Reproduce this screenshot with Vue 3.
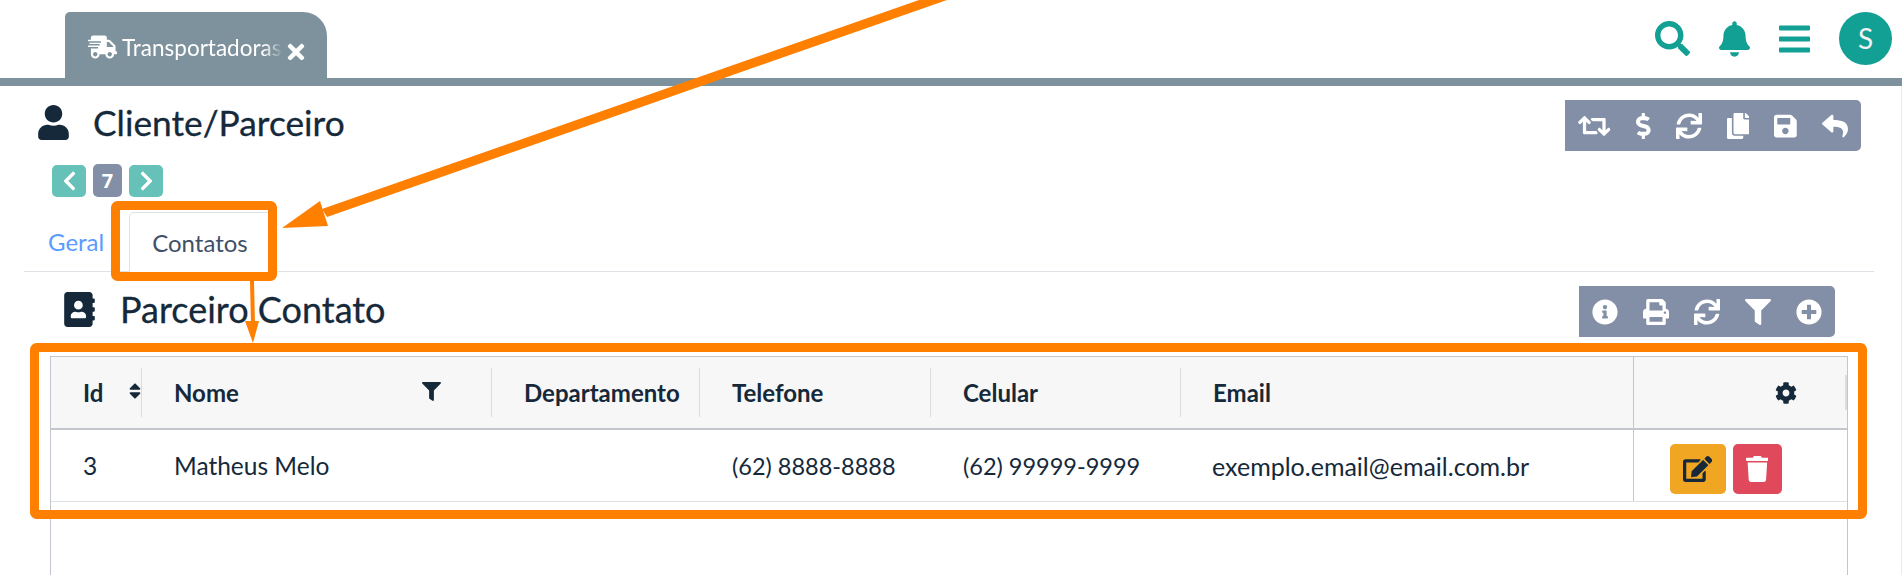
<template>
  <div class="page">
    <header class="topbar">
      <div class="tab">
        <svg class="tab-truck" viewBox="0 0 640 512"><path :d="icons.truck" /></svg>
        <span class="tab-label">Transportadoras</span>
        <svg class="tab-close" viewBox="0 0 352 512"><path :d="icons.times" /></svg>
      </div>
      <div class="nav">
        <svg class="nav-search" viewBox="0 0 512 512"><path :d="icons.search" /></svg>
        <svg class="nav-icon" viewBox="0 0 448 512"><path :d="icons.bell" /></svg>
        <svg class="nav-icon" viewBox="0 0 448 512"><path :d="icons.bars" /></svg>
        <div class="avatar">S</div>
      </div>
    </header>
    <div class="bar"></div>

    <main class="content">
      <section class="head">
        <h1 class="title">
          <svg class="title-icon" viewBox="0 0 448 512"><path :d="icons.user" /></svg>
          Cliente/Parceiro
        </h1>
        <div class="toolbar">
          <svg v-for="b in mainTools" :key="b.name" class="tool" :viewBox="b.box"><path :d="icons[b.name]" /></svg>
        </div>
      </section>

      <div class="pager">
        <button class="page-btn">
          <svg viewBox="0 0 320 512"><path :d="icons.left" /></svg>
        </button>
        <span class="page-num">7</span>
        <button class="page-btn">
          <svg viewBox="0 0 320 512"><path :d="icons.right" /></svg>
        </button>
      </div>

      <nav class="tabs">
        <a class="tab-link">Geral</a>
        <a class="tab-link active">Contatos</a>
      </nav>

      <section class="head sub">
        <h2 class="subtitle">
          <svg class="sub-icon" viewBox="0 0 448 512"><path :d="icons.book" /></svg>
          Parceiro Contato
        </h2>
        <div class="toolbar">
          <svg v-for="b in subTools" :key="b.name" class="tool" :viewBox="b.box"><path :d="icons[b.name]" /></svg>
        </div>
      </section>

      <div class="grid-wrap">
        <table class="grid">
          <colgroup>
            <col v-for="c in columns" :key="c.label" :style="{ width: c.width + 'px' }" />
            <col />
          </colgroup>
          <thead>
            <tr>
              <th v-for="c in columns" :key="c.label">
                <div class="th-in" :class="c.cls">
                  {{ c.label }}
                  <svg v-if="c.cls === 'th-id'" class="sort" viewBox="0 0 320 512"><path :d="icons.sort" /></svg>
                  <svg v-if="c.cls === 'th-name'" class="filter" viewBox="0 0 512 512"><path :d="icons.filter" /></svg>
                </div>
              </th>
              <th class="actions-col">
                <div class="th-actions">
                  <svg class="gear" viewBox="0 0 512 512"><path :d="icons.cog" /></svg>
                </div>
              </th>
            </tr>
          </thead>
          <tbody>
            <tr v-for="row in rows" :key="row.id">
              <td>{{ row.id }}</td>
              <td>{{ row.nome }}</td>
              <td>{{ row.departamento }}</td>
              <td class="phone">{{ row.telefone }}</td>
              <td class="phone">{{ row.celular }}</td>
              <td class="email">{{ row.email }}</td>
              <td class="actions-col">
                <div class="row-actions">
                  <button class="act edit">
                    <svg viewBox="0 0 576 512"><path :d="icons.edit" /></svg>
                  </button>
                  <button class="act del">
                    <svg viewBox="0 0 448 512"><path :d="icons.trash" /></svg>
                  </button>
                </div>
              </td>
            </tr>
          </tbody>
        </table>
      </div>
    </main>

    <!-- marcacoes laranja por cima da tela -->
    <svg class="marks" viewBox="0 0 1902 575">
      <polygon points="919,0 947,0 327,217 322,209" fill="#ff8000" />
      <polygon points="320,201 328,226 282,228" fill="#ff8000" />
      <rect x="115.5" y="205.5" width="157" height="71" rx="2" fill="none" stroke="#ff8000" stroke-width="9" />
      <line x1="252" y1="281" x2="253" y2="325" stroke="#ff8000" stroke-width="4" />
      <polygon points="245,321 259,321 253,343" fill="#ff8000" />
      <rect x="34.5" y="347.5" width="1828" height="167" rx="2" fill="none" stroke="#ff8000" stroke-width="9" />
    </svg>
  </div>
</template>

<script setup>
const icons = {
  truck: 'M624 352h-16V243.9c0-12.7-5.1-24.9-14.1-33.9L494 110.1c-9-9-21.2-14.1-33.9-14.1H416V48c0-26.5-21.5-48-48-48H112C85.5 0 64 21.5 64 48v48H8c-4.4 0-8 3.6-8 8v16c0 4.4 3.6 8 8 8h272c4.4 0 8 3.6 8 8v16c0 4.4-3.6 8-8 8H40c-4.4 0-8 3.6-8 8v16c0 4.4 3.6 8 8 8h208c4.4 0 8 3.6 8 8v16c0 4.4-3.6 8-8 8H8c-4.4 0-8 3.6-8 8v16c0 4.4 3.6 8 8 8h208c4.4 0 8 3.6 8 8v16c0 4.4-3.6 8-8 8H64v128c0 53 43 96 96 96s96-43 96-96h128c0 53 43 96 96 96s96-43 96-96h48c8.8 0 16-7.2 16-16v-32c0-8.8-7.2-16-16-16zM160 464c-26.5 0-48-21.5-48-48s21.5-48 48-48 48 21.5 48 48-21.5 48-48 48zm320 0c-26.5 0-48-21.5-48-48s21.5-48 48-48 48 21.5 48 48-21.5 48-48 48zm80-208H416V144h44.1l99.9 99.9V256z',
  times: 'M242.72 256l100.07-100.07c12.28-12.28 12.28-32.19 0-44.48l-22.24-22.24c-12.28-12.28-32.19-12.28-44.48 0L176 189.28 75.93 89.21c-12.28-12.28-32.19-12.28-44.48 0L9.21 111.45c-12.28 12.28-12.28 32.19 0 44.48L109.28 256 9.21 356.07c-12.28 12.28-12.28 32.19 0 44.48l22.24 22.24c12.28 12.28 32.2 12.28 44.48 0L176 322.72l100.07 100.07c12.28 12.28 32.2 12.28 44.48 0l22.24-22.24c12.28-12.28 12.28-32.19 0-44.48L242.72 256z',
  search: 'M505 442.7L405.3 343c-4.5-4.5-10.6-7-17-7H372c27.6-35.3 44-79.7 44-128C416 93.1 322.9 0 208 0S0 93.1 0 208s93.1 208 208 208c48.3 0 92.7-16.4 128-44v16.3c0 6.4 2.5 12.5 7 17l99.7 99.7c9.4 9.4 24.6 9.4 33.9 0l28.3-28.3c9.4-9.4 9.4-24.6.1-34zM208 336c-70.7 0-128-57.2-128-128 0-70.7 57.2-128 128-128 70.7 0 128 57.2 128 128 0 70.7-57.2 128-128 128z',
  bell: 'M224 512c35.32 0 63.97-28.65 63.97-64H160.03c0 35.35 28.65 64 63.97 64zm215.39-149.71c-19.32-20.76-55.47-51.99-55.47-154.29 0-77.7-54.48-139.9-127.94-155.16V32c0-17.67-14.32-32-31.98-32s-31.98 14.33-31.98 32v20.84C118.56 68.1 64.08 130.3 64.08 208c0 102.3-36.15 133.53-55.47 154.29-6 6.45-8.66 14.16-8.61 21.71.11 16.4 12.98 32 32.1 32h383.8c19.12 0 32-15.6 32.1-32 .05-7.55-2.61-15.27-8.61-21.71z',
  bars: 'M16 132h416c8.837 0 16-7.163 16-16V76c0-8.837-7.163-16-16-16H16C7.163 60 0 67.163 0 76v40c0 8.837 7.163 16 16 16zm0 160h416c8.837 0 16-7.163 16-16v-40c0-8.837-7.163-16-16-16H16c-8.837 0-16 7.163-16 16v40c0 8.837 7.163 16 16 16zm0 160h416c8.837 0 16-7.163 16-16v-40c0-8.837-7.163-16-16-16H16c-8.837 0-16 7.163-16 16v40c0 8.837 7.163 16 16 16z',
  user: 'M224 256c70.7 0 128-57.3 128-128S294.7 0 224 0 96 57.3 96 128s57.3 128 128 128zm89.6 32h-16.7c-22.2 10.2-46.9 16-72.9 16s-50.6-5.8-72.9-16h-16.7C60.2 288 0 348.2 0 422.4V464c0 26.5 21.5 48 48 48h352c26.5 0 48-21.5 48-48v-41.6c0-74.2-60.2-134.4-134.4-134.4z',
  left: 'M34.52 239.03L228.87 44.69c9.37-9.37 24.57-9.37 33.94 0l22.67 22.67c9.36 9.36 9.37 24.52.04 33.9L131.49 256l154.02 154.75c9.34 9.38 9.32 24.54-.04 33.9l-22.67 22.67c-9.37 9.37-24.57 9.37-33.94 0L34.52 272.97c-9.37-9.37-9.37-24.57 0-33.94z',
  right: 'M285.476 272.971L91.132 467.314c-9.373 9.373-24.569 9.373-33.941 0l-22.667-22.667c-9.357-9.357-9.375-24.522-.04-33.901L188.505 256 34.484 101.255c-9.335-9.379-9.317-24.544.04-33.901l22.667-22.667c9.373-9.373 24.569-9.373 33.941 0L285.475 239.03c9.373 9.372 9.373 24.568.001 33.941z',
  retweet: 'M629.657 343.598L528.971 444.284c-9.373 9.372-24.568 9.372-33.941 0L394.343 343.598c-9.373-9.373-9.373-24.569 0-33.941l10.823-10.823c9.562-9.562 25.133-9.34 34.419.492L480 342.118V160H292.451a24.005 24.005 0 0 1-16.971-7.029l-16-16C244.361 121.851 255.069 96 276.451 96H520c13.255 0 24 10.745 24 24v222.118l40.416-43.792c9.285-9.831 24.856-10.054 34.419-.492l10.823 10.823c9.372 9.372 9.372 24.568-.001 33.941zm-265.138 15.431A23.999 23.999 0 0 0 347.548 352H160V169.881l40.416 43.792c9.286 9.831 24.856 10.054 34.419.491l10.822-10.822c9.373-9.373 9.373-24.569 0-33.941L144.971 67.716c-9.373-9.373-24.569-9.373-33.941 0L10.343 168.402c-9.373 9.373-9.373 24.569 0 33.941l10.822 10.822c9.562 9.562 25.133 9.34 34.419-.491L96 169.881V392c0 13.255 10.745 24 24 24h243.549c21.382 0 32.09-25.851 16.971-40.971l-16.001-16z',
  dollar: 'M209.2 233.4l-108-31.6C88.7 198.2 80 186.5 80 173.5c0-16.3 13.2-29.5 29.5-29.5h66.3c12.2 0 24.2 3.7 34.2 10.5 6.1 4.1 14.3 3.1 19.5-2l34.8-34c7.1-6.9 6.1-18.4-1.8-24.5C238 74.8 207.4 64.1 176 64V16c0-8.8-7.2-16-16-16h-32c-8.8 0-16 7.2-16 16v48h-2.5C45.8 64-5.4 118.7.5 183.6c4.2 46.1 39.4 83.6 83.8 96.6l102.5 30c12.5 3.7 21.2 15.3 21.2 28.3 0 16.3-13.2 29.5-29.5 29.5h-66.3C100 368 88 364.3 78 357.5c-6.1-4.1-14.3-3.1-19.5 2l-34.8 34c-7.1 6.9-6.1 18.4 1.8 24.5 24.5 19.2 55.1 29.9 86.5 30v48c0 8.8 7.2 16 16 16h32c8.8 0 16-7.2 16-16v-48.2c46.6-.9 90.3-28.6 105.7-72.7 21.5-61.6-14.6-124.8-72.5-141.7z',
  sync: 'M440.65 12.57l4 82.77A247.16 247.16 0 0 0 255.83 8C134.73 8 33.91 94.92 12.29 209.82A12 12 0 0 0 24.09 224h49.05a12 12 0 0 0 11.67-9.26 175.91 175.91 0 0 1 317-56.94l-101.46-4.86a12 12 0 0 0-12.57 12v47.41a12 12 0 0 0 12 12H500a12 12 0 0 0 12-12V12a12 12 0 0 0-12-12h-47.37a12 12 0 0 0-11.98 12.57zM255.83 432a175.61 175.61 0 0 1-146-77.8l101.8 4.87a12 12 0 0 0 12.57-12v-47.4a12 12 0 0 0-12-12H12a12 12 0 0 0-12 12V500a12 12 0 0 0 12 12h47.35a12 12 0 0 0 12-12.6l-4.15-82.57A247.17 247.17 0 0 0 255.83 504c121.11 0 221.93-86.92 243.55-201.82a12 12 0 0 0-11.8-14.18h-49.05a12 12 0 0 0-11.67 9.26A175.86 175.86 0 0 1 255.83 432z',
  copy: 'M320 448v40c0 13.255-10.745 24-24 24H24c-13.255 0-24-10.745-24-24V120c0-13.255 10.745-24 24-24h72v296c0 30.879 25.121 56 56 56h168zm0-344V0H152c-13.255 0-24 10.745-24 24v368c0 13.255 10.745 24 24 24h272c13.255 0 24-10.745 24-24V128H344c-13.2 0-24-10.8-24-24zm120.971-31.029L375.029 7.029A24 24 0 0 0 358.059 0H352v96h96v-6.059a24 24 0 0 0-7.029-16.97z',
  save: 'M433.941 129.941l-83.882-83.882A48 48 0 0 0 316.118 32H48C21.49 32 0 53.49 0 80v352c0 26.51 21.49 48 48 48h352c26.51 0 48-21.49 48-48V163.882a48 48 0 0 0-14.059-33.941zM224 416c-35.346 0-64-28.654-64-64 0-35.346 28.654-64 64-64s64 28.654 64 64c0 35.346-28.654 64-64 64zm96-304.52V212c0 6.627-5.373 12-12 12H76c-6.627 0-12-5.373-12-12V108c0-6.627 5.373-12 12-12h228.52c3.183 0 6.235 1.264 8.485 3.515l3.48 3.48A11.996 11.996 0 0 1 320 111.48z',
  reply: 'M8.309 189.836L184.313 37.851C199.719 24.546 224 35.347 224 56.015v80.053c160.629 1.839 288 34.032 288 186.258 0 61.441-39.581 122.309-83.333 154.132-13.653 9.931-33.111-2.533-28.077-18.631 45.344-145.012-21.507-183.51-176.59-185.742V360c0 20.7-24.3 31.453-39.687 18.164l-176.004-152c-11.071-9.562-11.086-26.753 0-36.328z',
  info: 'M256 8C119.043 8 8 119.083 8 256c0 136.997 111.043 248 248 248s248-111.003 248-248C504 119.083 392.957 8 256 8zm0 110c23.196 0 42 18.804 42 42s-18.804 42-42 42-42-18.804-42-42 18.804-42 42-42zm56 254c0 6.627-5.373 12-12 12h-88c-6.627 0-12-5.373-12-12v-24c0-6.627 5.373-12 12-12h12v-64h-12c-6.627 0-12-5.373-12-12v-24c0-6.627 5.373-12 12-12h64c6.627 0 12 5.373 12 12v100h12c6.627 0 12 5.373 12 12v24z',
  print: 'M448 192V77.25c0-8.49-3.37-16.62-9.37-22.63L393.37 9.37c-6-6-14.14-9.37-22.63-9.37H96C78.33 0 64 14.33 64 32v160c-35.35 0-64 28.65-64 64v112c0 8.84 7.16 16 16 16h48v96c0 17.67 14.33 32 32 32h320c17.67 0 32-14.33 32-32v-96h48c8.84 0 16-7.16 16-16V256c0-35.35-28.65-64-64-64zm-64 256H128v-96h256v96zm0-224H128V64h192v48c0 8.84 7.16 16 16 16h48v96zm48 72c-13.25 0-24-10.75-24-24 0-13.26 10.75-24 24-24s24 10.74 24 24c0 13.25-10.75 24-24 24z',
  filter: 'M487.976 0H24.028C2.71 0-8.047 25.866 7.058 40.971L192 225.941V432c0 7.831 3.821 15.17 10.237 19.662l80 55.98C298.02 518.69 320 507.493 320 487.98V225.941l184.947-184.97C520.021 25.896 509.338 0 487.976 0z',
  plus: 'M256 8C119 8 8 119 8 256s111 248 248 248 248-111 248-248S393 8 256 8zm144 276c0 6.6-5.4 12-12 12h-92v92c0 6.6-5.4 12-12 12h-56c-6.6 0-12-5.4-12-12v-92h-92c-6.6 0-12-5.4-12-12v-56c0-6.6 5.4-12 12-12h92v-92c0-6.6 5.4-12 12-12h56c6.6 0 12 5.4 12 12v92h92c6.6 0 12 5.4 12 12v56z',
  cog: 'M487.4 315.7l-42.6-24.6c4.3-23.2 4.3-47 0-70.2l42.6-24.6c4.9-2.8 7.1-8.6 5.5-14-11.1-35.6-30-67.8-54.7-94.6-3.8-4.1-10-5.1-14.8-2.3L380.8 110c-17.9-15.4-38.5-27.3-60.8-35.1V25.8c0-5.6-3.9-10.5-9.4-11.7-36.7-8.2-74.3-7.8-109.2 0-5.5 1.2-9.4 6.1-9.4 11.7V75c-22.2 7.9-42.8 19.8-60.8 35.1L88.7 85.5c-4.9-2.8-11-1.9-14.8 2.3-24.7 26.7-43.6 58.9-54.7 94.6-1.7 5.4.6 11.2 5.5 14L67.3 221c-4.3 23.2-4.3 47 0 70.2l-42.6 24.6c-4.9 2.8-7.1 8.6-5.5 14 11.1 35.6 30 67.8 54.7 94.6 3.8 4.1 10 5.1 14.8 2.3l42.6-24.6c17.9 15.4 38.5 27.3 60.8 35.1v49.2c0 5.6 3.9 10.5 9.4 11.7 36.7 8.2 74.3 7.8 109.2 0 5.5-1.2 9.4-6.1 9.4-11.7v-49.2c22.2-7.9 42.8-19.8 60.8-35.1l42.6 24.6c4.9 2.8 11 1.9 14.8-2.3 24.7-26.7 43.6-58.9 54.7-94.6 1.5-5.5-.7-11.3-5.6-14.1zM256 336c-44.1 0-80-35.9-80-80s35.9-80 80-80 80 35.9 80 80-35.9 80-80 80z',
  edit: 'M402.6 83.2l90.2 90.2c3.8 3.8 3.8 10 0 13.8L274.4 405.6l-92.8 10.3c-12.4 1.4-22.9-9.1-21.5-21.5l10.3-92.8L388.8 83.2c3.8-3.8 10-3.8 13.8 0zm162-22.9l-48.8-48.8c-15.2-15.2-39.9-15.2-55.2 0l-35.4 35.4c-3.8 3.8-3.8 10 0 13.8l90.2 90.2c3.8 3.8 10 3.8 13.8 0l35.4-35.4c15.2-15.3 15.2-40 0-55.2zM384 346.2V448H64V128h229.8c3.2 0 6.2-1.3 8.5-3.5l40-40c7.6-7.6 2.2-20.5-8.5-20.5H48C21.5 64 0 85.5 0 112v352c0 26.5 21.5 48 48 48h352c26.5 0 48-21.5 48-48V306.2c0-10.7-12.9-16-20.5-8.5l-40 40c-2.2 2.3-3.5 5.3-3.5 8.5z',
  trash: 'M432 32H312l-9.4-18.7A24 24 0 0 0 281.1 0H166.8a23.72 23.72 0 0 0-21.4 13.3L136 32H16A16 16 0 0 0 0 48v32a16 16 0 0 0 16 16h416a16 16 0 0 0 16-16V48a16 16 0 0 0-16-16zM53.2 467a48 48 0 0 0 47.9 45h245.8a48 48 0 0 0 47.9-45L416 128H32z',
  book: 'M436 160c6.6 0 12-5.4 12-12v-40c0-6.6-5.4-12-12-12h-20V48c0-26.5-21.5-48-48-48H48C21.5 0 0 21.5 0 48v416c0 26.5 21.5 48 48 48h320c26.5 0 48-21.5 48-48v-48h20c6.6 0 12-5.4 12-12v-40c0-6.6-5.4-12-12-12h-20v-64h20c6.6 0 12-5.4 12-12v-40c0-6.6-5.4-12-12-12h-20v-64h20zm-228-32c35.3 0 64 28.7 64 64s-28.7 64-64 64-64-28.7-64-64 28.7-64 64-64zm112 236.8c0 10.6-10 19.2-22.4 19.2H118.4C106 384 96 375.4 96 364.8v-19.2c0-31.8 30.1-57.6 67.2-57.6h5c12.3 5.1 25.7 8 39.8 8s27.6-2.9 39.8-8h5c37.1 0 67.2 25.8 67.2 57.6v19.2z',
  sort: 'M41 288h238c21.4 0 32.1 25.9 17 41L177 448c-9.4 9.4-24.6 9.4-33.9 0L24 329c-15.1-15.1-4.4-41 17-41zm255-105L177 64c-9.4-9.4-24.6-9.4-33.9 0L24 183c-15.1 15.1-4.4 41 17 41h238c21.4 0 32.1-25.9 17-41z',
};

const mainTools = [
  { name: 'retweet', box: '0 0 640 512' },
  { name: 'dollar', box: '0 0 288 512' },
  { name: 'sync', box: '0 0 512 512' },
  { name: 'copy', box: '0 0 448 512' },
  { name: 'save', box: '0 0 448 512' },
  { name: 'reply', box: '0 0 512 512' },
];

const subTools = [
  { name: 'info', box: '0 0 512 512' },
  { name: 'print', box: '0 0 512 512' },
  { name: 'sync', box: '0 0 512 512' },
  { name: 'filter', box: '0 0 512 512' },
  { name: 'plus', box: '0 0 512 512' },
];

const columns = [
  { label: 'Id', width: 91, cls: 'th-id' },
  { label: 'Nome', width: 350, cls: 'th-name' },
  { label: 'Departamento', width: 208, cls: '' },
  { label: 'Telefone', width: 231, cls: '' },
  { label: 'Celular', width: 250, cls: '' },
  { label: 'Email', width: 452, cls: 'th-last' },
];

const rows = [
  {
    id: 3,
    nome: 'Matheus Melo',
    departamento: '',
    telefone: '(62) 8888-8888',
    celular: '(62) 99999-9999',
    email: 'exemplo.email@email.com.br',
  },
];
</script>

<style scoped>
.page {
  position: relative;
  height: 575px;
  overflow: hidden;
  display: flex;
  flex-direction: column;
  background: #fff;
  color: #15293a;
  font-family: Lato, 'Open Sans', sans-serif;
}

.topbar {
  height: 78px;
  display: flex;
  align-items: flex-end;
  padding-left: 65px;
}
.tab {
  width: 262px;
  height: 66px;
  box-sizing: border-box;
  padding: 22px 0 0 23px;
  display: flex;
  background: #7d929c;
  border-radius: 5px 24px 0 0;
  color: #fff;
}
.tab-truck {
  width: 29px;
  height: 24px;
  fill: #fff;
  margin-top: 1px;
}
.tab-label {
  width: 161px;
  margin-left: 5px;
  overflow: hidden;
  white-space: nowrap;
  font-size: 22.5px;
  line-height: 28px;
  -webkit-mask-image: linear-gradient(to right, #000 88%, transparent 100%);
  mask-image: linear-gradient(to right, #000 88%, transparent 100%);
}
.tab-close {
  width: 18px;
  height: 24px;
  margin: 6px 0 0 4px;
  fill: #fff;
}
.nav {
  margin-left: auto;
  align-self: flex-start;
  padding: 12px 10px 0 0;
  display: flex;
  align-items: center;
  gap: 29px;
  fill: #12a094;
}
.nav-search {
  width: 35px;
  height: 35px;
}
.nav-icon {
  width: 31px;
  height: 36px;
}
.avatar {
  width: 53px;
  height: 53px;
  border-radius: 50%;
  background: #12a094;
  color: #f2f2f2;
  font-size: 28px;
  line-height: 53px;
  text-align: center;
}
.bar {
  height: 8px;
  background: #7d929c;
}

.content {
  flex: 1;
  min-height: 0;
  display: flex;
  flex-direction: column;
  border-right: 1px solid #ececec;
}
.head {
  display: flex;
  justify-content: space-between;
  margin-top: 14px;
  padding: 0 40px 0 38px;
}
.title {
  margin: 0;
  display: flex;
  align-items: center;
  height: 44px;
  font-size: 35.3px;
  font-weight: 400;
  -webkit-text-stroke: 0.3px #15293a;
}
.title-icon {
  width: 31px;
  height: 35px;
  margin-right: 24px;
  fill: #15293a;
}
.toolbar {
  height: 51px;
  box-sizing: border-box;
  padding: 0 13px;
  display: flex;
  align-items: center;
  gap: 25px;
  background: #838fa6;
  border-radius: 0 5px 5px 0;
}
.tool {
  height: 26px;
  fill: #fff;
}

.pager {
  margin-top: 13px;
  padding-left: 52px;
  display: flex;
  align-items: center;
  gap: 7px;
}
.page-btn {
  width: 34px;
  height: 32px;
  padding: 0;
  border: 0;
  border-radius: 5px;
  background: #66c1b8;
  fill: #fff;
}
.page-btn svg {
  display: block;
  width: 17px;
  height: 22px;
  margin: 0 auto;
}
.page-num {
  width: 29px;
  height: 33px;
  border-radius: 5px;
  background: #838fa6;
  color: #fff;
  font-family: 'Open Sans', sans-serif;
  font-size: 20px;
  font-weight: 700;
  line-height: 33px;
  text-align: center;
}

.tabs {
  margin: 15px 27px 0 24px;
  height: 59px;
  display: flex;
  border-bottom: 1px solid #dee2e6;
}
.tab-link {
  padding: 0 24px;
  font-size: 24px;
  line-height: 60px;
  color: #5b9bff;
}
.tab-link.active {
  margin-left: 1px;
  height: 60px;
  padding: 0 22px;
  box-sizing: border-box;
  border: 1px solid #dee2e6;
  border-bottom-color: #fff;
  border-radius: 5px 5px 0 0;
  background: #fff;
  color: #3f5066;
}

.head.sub {
  margin-top: 14px;
  padding: 0 66px 0 64px;
}
.subtitle {
  margin: 0 0 0 -1px;
  display: flex;
  align-items: center;
  height: 46px;
  font-size: 36px;
  font-weight: 400;
  -webkit-text-stroke: 0.3px #15293a;
}
.sub-icon {
  width: 31px;
  height: 35px;
  margin: 0 25px 0 1px;
  fill: #15293a;
}

.grid-wrap {
  flex: 1;
  margin: 19px 53px 0 50px;
  border: 1px solid #c3c6cd;
  border-bottom: 0;
}
.grid {
  width: 100%;
  table-layout: fixed;
  border-collapse: collapse;
  font-size: 24.5px;
}
th {
  height: 71px;
  padding: 0;
  background: #f7f7f7;
  border-bottom: 2px solid #c3c6cd;
  font-weight: 700;
  font-size: 24px;
  text-align: left;
}
.th-in {
  height: 49px;
  box-sizing: border-box;
  padding-left: 32px;
  display: flex;
  align-items: center;
  justify-content: space-between;
  border-right: 1px solid #dcdcdc;
}
.th-name {
  padding-right: 50px;
}
.th-last {
  border-right: 0;
}
.sort {
  width: 12px;
  height: 20px;
  fill: #15293a;
  margin-top: -3px;
}
.filter {
  width: 19px;
  height: 19px;
  fill: #15293a;
  margin-top: -3px;
}
.th-actions {
  height: 35px;
  padding-right: 48px;
  display: flex;
  align-items: center;
  justify-content: flex-end;
  border-right: 2px solid #dcdcdc;
}
.gear {
  width: 22px;
  height: 22px;
  fill: #15293a;
}
.actions-col {
  border-left: 1px solid #c3c6cd;
}
td {
  height: 71px;
  padding: 0 0 0 32px;
  border-bottom: 1px solid #dee2e6;
}
td.phone {
  font-size: 23.5px;
}
td.email {
  padding-left: 31px;
  font-size: 25px;
}
td.actions-col {
  padding: 0 0 0 36px;
}
.row-actions {
  display: flex;
  gap: 7px;
  margin-top: 6px;
}
.act {
  height: 50px;
  padding: 0;
  border: 0;
  border-radius: 5px;
}
.act.edit {
  width: 56px;
  background: #f0a622;
  fill: #15293a;
}
.act.del {
  width: 49px;
  background: #e0485c;
  fill: #fff;
}
.act svg {
  display: block;
  height: 26px;
  margin: 0 auto;
}

.marks {
  position: absolute;
  left: 0;
  top: 0;
  width: 1902px;
  height: 575px;
  pointer-events: none;
}
</style>
